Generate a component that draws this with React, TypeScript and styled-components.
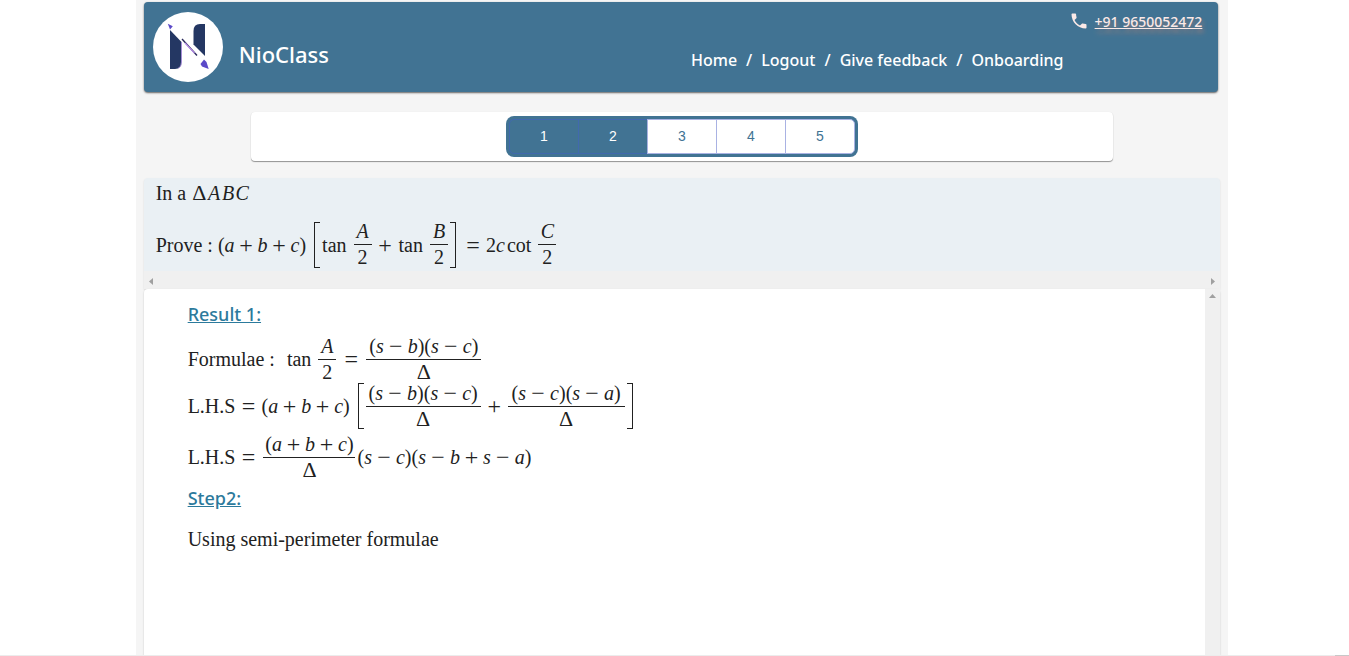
import React from "react";
import styled, { createGlobalStyle } from "styled-components";

const BLUE = "#417393";

const GlobalStyle = createGlobalStyle`
  *, *::before, *::after { box-sizing: border-box; }
  body {
    margin: 0;
    background: #fff;
    color: #212121;
    font-family: "Noto Sans", "Open Sans", sans-serif;
  }
`;

const Page = styled.div`
  min-height: 100vh;
  display: flex;
  flex-direction: column;
`;

const Gutter = styled.div`
  flex: 1;
  display: flex;
  justify-content: center;
  padding-left: 15px;
`;

const Shell = styled.div`
  width: 81vw;
  display: flex;
  flex-direction: column;
  padding: 2px 8px 0;
  background: #f5f5f5;
`;

const Header = styled.header`
  display: flex;
  height: 90px;
  margin-right: 2px;
  padding: 0 16px 0 9px;
  border-radius: 4px;
  background: ${BLUE};
  color: #fff;
  box-shadow: 0 1px 2px rgba(0, 0, 0, 0.6);
`;

const Brand = styled.a`
  display: flex;
  align-items: center;
  gap: 16px;
  flex: 1;
  color: #fff;
  text-decoration: none;
`;

const BrandName = styled.span`
  padding-top: 14px;
  font-size: 22px;
  line-height: 30px;
  font-weight: 500;
`;

const HeaderSide = styled.div`
  display: flex;
  flex-direction: column;
  width: 49%;
  padding: 6px 0 0 3px;
`;

const Phone = styled.a`
  display: flex;
  align-items: center;
  align-self: flex-end;
  gap: 6px;
  height: 26px;
  color: #fbe9e7;
  font-size: 14px;
  font-weight: 500;
  text-shadow: 2px 4px 4px rgba(255, 138, 101, 0.4);
`;

const Nav = styled.nav`
  display: flex;
  gap: 9px;
  padding-top: 14px;
  font-size: 16px;
  line-height: 24px;
  font-weight: 500;
`;

const NavLink = styled.a`
  color: #fff;
  text-decoration: none;
`;

const PagerCard = styled.div`
  display: flex;
  justify-content: center;
  width: 80%;
  margin: 20px auto 17px;
  padding: 4px 0;
  border-radius: 4px;
  background: #fff;
  box-shadow: 0 1px 1px rgba(0, 0, 0, 0.4), 0 0 1px rgba(0, 0, 0, 0.08);
`;

const Pager = styled.div`
  display: flex;
  padding: 3px;
  border-radius: 8px;
  background: ${BLUE};
`;

const PageButton = styled.button<{ $done?: boolean }>`
  width: 70px;
  height: 35px;
  padding: 0 0 2px;
  border: 1px solid ${(p) => (p.$done ? "#4169ae" : "#a9b2e3")};
  background: ${(p) => (p.$done ? BLUE : "#fff")};
  color: ${(p) => (p.$done ? "#fff" : BLUE)};
  font-family: "Liberation Sans", Arial, sans-serif;
  font-size: 14px;
  & + & { margin-left: -1px; }
  &:first-child { border-radius: 5px 0 0 5px; }
  &:last-child { border-radius: 0 5px 5px 0; }
`;

const Problem = styled.section`
  border-radius: 4px 4px 0 0;
  background: #eaf0f4;
  box-shadow: 0 1px 2px rgba(0, 0, 0, 0.12);
`;

const ProblemBody = styled.div`
  padding: 0 12px 2px;
`;

const HorizontalBar = styled.div`
  display: flex;
  justify-content: space-between;
  align-items: center;
  height: 18px;
  padding-top: 2px;
  background: #f0f0f0;
`;

const Arrow = styled.button`
  display: flex;
  align-items: center;
  justify-content: center;
  width: 15px;
  height: 15px;
  padding: 0;
  border: 0;
  background: transparent;
`;

const Solution = styled.section`
  flex: 1;
  display: flex;
  border-radius: 4px 4px 0 0;
  background: #fff;
  box-shadow: 0 1px 2px rgba(0, 0, 0, 0.2);
`;

const SolutionBody = styled.div`
  flex: 1;
  padding: 11px 44px;
`;

const VerticalBar = styled.div`
  width: 15px;
  background: #f0f0f0;
`;

const StepTitle = styled.h2`
  margin: 0;
  color: #2c7a9c;
  font-size: 18px;
  line-height: 28px;
  font-weight: 500;
  text-decoration: underline;
`;

const Line = styled.div<{ $height: number }>`
  display: flex;
  align-items: center;
  height: ${(p) => p.$height}px;
  white-space: pre;
  font-family: "Liberation Serif", "Times New Roman", serif;
  font-size: 20px;
  line-height: 24px;
`;

const Sym = styled.span<{ $w: number }>`
  width: ${(p) => p.$w}px;
  font-size: 24px;
  text-align: center;
`;

const Delta = styled.span`
  width: 16px;
  font-size: 22px;
  text-align: center;
`;

const Capital = styled.i`
  min-width: 14px;
  text-align: center;
`;

const Fn = styled.span`
  margin: 0 5px 0 2px;
`;

const Fraction = styled.span<{ $w: number }>`
  display: flex;
  flex-direction: column;
  width: ${(p) => p.$w}px;
  margin: 0 2px;
`;

const Top = styled.span`
  display: flex;
  justify-content: center;
  height: 26px;
  border-bottom: 1px solid #212121;
`;

const Bottom = styled.span`
  display: flex;
  justify-content: center;
  height: 25px;
`;

const Bracketed = styled.span`
  display: flex;
  align-items: center;
  height: 46px;
  margin: 0 4px 0 8px;
  &::before, &::after {
    content: "";
    width: 6px;
    height: 46px;
    border: 1px solid #212121;
  }
  &::before { border-right: 0; }
  &::after { border-left: 0; }
`;

const BottomTrack = styled.div`
  display: flex;
  justify-content: flex-end;
  height: 1px;
  background: #ececec;
`;

const BottomThumb = styled.div`
  width: 14px;
  background: #c8c8c8;
`;

const SLOTS: Record<string, number> = { "+": 23, "−": 24, "=": 26 };

/* Sets a run of math: letters italic, operators centred in an even slot. */
const Expr = ({ children }: { children: string }) => (
  <>
    {Array.from(children).map((ch, i) => {
      if (SLOTS[ch]) return <Sym key={i} $w={SLOTS[ch]}>{ch}</Sym>;
      if (ch === "Δ") return <Delta key={i}>{ch}</Delta>;
      if (/[A-Z]/.test(ch)) return <Capital key={i}>{ch}</Capital>;
      if (/[a-z]/.test(ch)) return <i key={i}>{ch}</i>;
      return <span key={i}>{ch}</span>;
    })}
  </>
);

const Frac = ({ top, bottom, w }: { top: string; bottom: string; w: number }) => (
  <Fraction $w={w}>
    <Top><Expr>{top}</Expr></Top>
    <Bottom><Expr>{bottom}</Expr></Bottom>
  </Fraction>
);

const Logo = () => (
  <svg width="70" height="70" viewBox="0 0 70 70" aria-hidden="true">
    <circle cx="35" cy="35" r="35" fill="#fff" />
    <path d="M17 18 28.500 30V50Q28.500 57 22 57H17Z" fill="#243763" />
    <path d="M28.500 30V50Q28.500 55 25 56.500" fill="none" stroke="#a98ae0" strokeWidth="0.8" />
    <path d="M52 12V44L40.500 32.500V19Q40.500 12 47 12Z" fill="#243763" />
    <path d="M29 27 44 43.500" stroke="#2b2a5c" strokeWidth="1.400" />
    <path d="M32 31 41.500 41" stroke="#b58be6" strokeWidth="1.200" />
    <path d="m14.800 11.800 5 2.400-2.800 3.300Z" fill="#5b49c8" />
    <path d="M47.500 52 51 47.500 53.500 50 55.700 57 49 54.500Z" fill="#5b49c8" />
  </svg>
);

const PhoneIcon = () => (
  <svg width="20" height="20" viewBox="0 0 24 24" fill="#fbe9e7" aria-hidden="true">
    <path d="M6.620 10.790c1.440 2.830 3.760 5.140 6.590 6.590l2.200-2.200c.27-.27.67-.36 1.020-.24 1.120.37 2.330.57 3.570.57.55 0 1 .45 1 1V20c0 .55-.45 1-1 1-9.390 0-17-7.610-17-17 0-.55.45-1 1-1h3.500c.55 0 1 .45 1 1 0 1.250.2 2.450.57 3.570.11.35.03.74-.25 1.020l-2.200 2.200z" />
  </svg>
);

const Triangle = ({ d }: { d: string }) => (
  <svg width="7" height="7" viewBox="0 0 7 7" fill="#a0a0a0" aria-hidden="true">
    <path d={d} />
  </svg>
);

export default function App() {
  return (
    <>
      <GlobalStyle />
      <Page>
        <Gutter>
          <Shell>
            <Header>
              <Brand href="#">
                <Logo />
                <BrandName>NioClass</BrandName>
              </Brand>
              <HeaderSide>
                <Phone href="tel:+919650052472">
                  <PhoneIcon />
                  +91 9650052472
                </Phone>
                <Nav>
                  <NavLink href="#home">Home</NavLink>
                  <span>/</span>
                  <NavLink href="#logout">Logout</NavLink>
                  <span>/</span>
                  <NavLink href="#feedback">Give feedback</NavLink>
                  <span>/</span>
                  <NavLink href="#onboarding">Onboarding</NavLink>
                </Nav>
              </HeaderSide>
            </Header>

            <PagerCard>
              <Pager>
                {[1, 2, 3, 4, 5].map((n) => (
                  <PageButton key={n} $done={n < 3}>{n}</PageButton>
                ))}
              </Pager>
            </PagerCard>

            <Problem>
              <ProblemBody>
                <Line $height={30}>In a <Expr>ΔABC</Expr></Line>
                <Line $height={12} />
                <Line $height={49}>
                  Prove : <Expr>(a+b+c)</Expr>
                  <Bracketed>
                    <Fn>tan</Fn>
                    <Frac top="A" bottom="2" w={18} />
                    <Expr>+</Expr>
                    <Fn>tan</Fn>
                    <Frac top="B" bottom="2" w={18} />
                  </Bracketed>
                  <Expr>=2c</Expr>
                  <Fn>cot</Fn>
                  <Frac top="C" bottom="2" w={18} />
                </Line>
              </ProblemBody>
              <HorizontalBar>
                <Arrow aria-label="Scroll left"><Triangle d="M5 0v7L1 3.500z" /></Arrow>
                <Arrow aria-label="Scroll right"><Triangle d="M2 0v7l4-3.500z" /></Arrow>
              </HorizontalBar>
            </Problem>

            <Solution>
              <SolutionBody>
                <StepTitle>Result 1:</StepTitle>
                <Line $height={8} />
                <Line $height={46}>
                  Formulae :  <Fn>tan</Fn>
                  <Frac top="A" bottom="2" w={18} />
                  <Expr>=</Expr>
                  <Frac top="(s−b)(s−c)" bottom="Δ" w={115} />
                </Line>
                <Line $height={48}>
                  L.H.S<Expr>=(a+b+c)</Expr>
                  <Bracketed>
                    <Frac top="(s−b)(s−c)" bottom="Δ" w={115} />
                    <Expr>+</Expr>
                    <Frac top="(s−c)(s−a)" bottom="Δ" w={117} />
                  </Bracketed>
                </Line>
                <Line $height={54}>
                  L.H.S<Expr>=</Expr>
                  <Frac top="(a+b+c)" bottom="Δ" w={92} />
                  <Expr>(s−c)(s−b+s−a)</Expr>
                </Line>
                <StepTitle>Step2:</StepTitle>
                <Line $height={54}>Using semi-perimeter formulae</Line>
              </SolutionBody>
              <VerticalBar>
                <Arrow aria-label="Scroll up"><Triangle d="M0 5h7L3.500 1z" /></Arrow>
              </VerticalBar>
            </Solution>
          </Shell>
        </Gutter>
        <BottomTrack>
          <BottomThumb />
        </BottomTrack>
      </Page>
    </>
  );
}
